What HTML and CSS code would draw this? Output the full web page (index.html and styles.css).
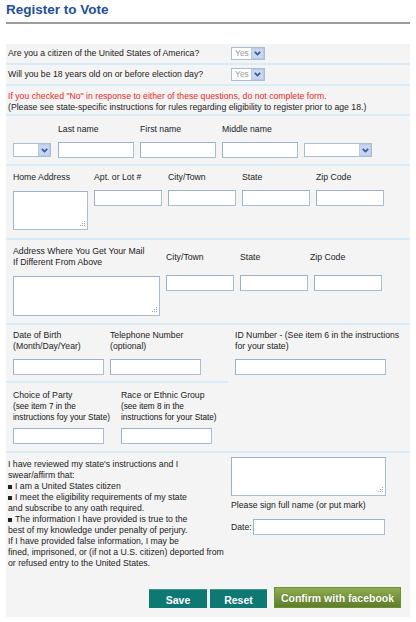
FILE: index.html
```html
<!DOCTYPE html>
<html lang="en">
<head>
<meta charset="utf-8">
<title>Register to Vote</title>
<link rel="stylesheet" href="styles.css">
</head>
<body>
<div class="page">
  <h1 class="title">Register to Vote</h1>
  <form class="form">
    <div class="row q-row">
      <span>Are you a citizen of the United States of America?</span>
      <span class="select sel-yes"><span class="sel-val">Yes</span><span class="sel-btn"><svg width="7" height="5" viewBox="0 0 7 5"><path d="M0.8 0.8 L3.5 3.6 L6.2 0.8" fill="none" stroke="#3b5a8e" stroke-width="1.7"/></svg></span></span>
    </div>
    <div class="row q-row">
      <span>Will you be 18 years old on or before election day?</span>
      <span class="select sel-yes"><span class="sel-val">Yes</span><span class="sel-btn"><svg width="7" height="5" viewBox="0 0 7 5"><path d="M0.8 0.8 L3.5 3.6 L6.2 0.8" fill="none" stroke="#3b5a8e" stroke-width="1.7"/></svg></span></span>
    </div>
    <div class="row notice">
      <div class="red">If you checked "No" in response to either of these questions, do not complete form.</div>
      <div>(Please see state-specific instructions for rules regarding eligibility to register prior to age 18.)</div>
    </div>

    <div class="row name-row">
      <span></span>
      <span class="lbl">Last name</span>
      <span class="lbl">First name</span>
      <span class="lbl">Middle name</span>
      <span></span>
      <span class="select sel-name sel-prefix"><span class="sel-val"></span><span class="sel-btn"><svg width="7" height="5" viewBox="0 0 7 5"><path d="M0.8 0.8 L3.5 3.6 L6.2 0.8" fill="none" stroke="#3b5a8e" stroke-width="1.7"/></svg></span></span>
      <span class="input"></span>
      <span class="input"></span>
      <span class="input"></span>
      <span class="select sel-name"><span class="sel-val"></span><span class="sel-btn"><svg width="7" height="5" viewBox="0 0 7 5"><path d="M0.8 0.8 L3.5 3.6 L6.2 0.8" fill="none" stroke="#3b5a8e" stroke-width="1.7"/></svg></span></span>
    </div>

    <div class="row home-row">
      <span class="lbl">Home Address</span>
      <span class="lbl">Apt. or Lot #</span>
      <span class="lbl">City/Town</span>
      <span class="lbl">State</span>
      <span class="lbl">Zip Code</span>
      <span class="textarea ta-home"><svg class="grip" width="6" height="6" viewBox="0 0 6 6"><rect x="5" y="0" width="1" height="1"/><rect x="3" y="2" width="1" height="1"/><rect x="5" y="2" width="1" height="1"/><rect x="1" y="4" width="1" height="1"/><rect x="3" y="4" width="1" height="1"/><rect x="5" y="4" width="1" height="1"/></svg></span>
      <span class="input"></span>
      <span class="input"></span>
      <span class="input"></span>
      <span class="input"></span>
    </div>

    <div class="row mail-row">
      <span class="lbl">Address Where You Get Your Mail<br>If Different From Above</span>
      <span class="lbl mid">City/Town</span>
      <span class="lbl mid">State</span>
      <span class="lbl mid zip-lbl">Zip Code</span>
      <span class="textarea ta-mail"><svg class="grip" width="6" height="6" viewBox="0 0 6 6"><rect x="5" y="0" width="1" height="1"/><rect x="3" y="2" width="1" height="1"/><rect x="5" y="2" width="1" height="1"/><rect x="1" y="4" width="1" height="1"/><rect x="3" y="4" width="1" height="1"/><rect x="5" y="4" width="1" height="1"/></svg></span>
      <span class="input"></span>
      <span class="input"></span>
      <span class="input"></span>
    </div>

    <div class="split">
      <div class="split-left">
        <div class="sub sub-dob">
          <span class="lbl">Date of Birth<br>(Month/Day/Year)</span>
          <span class="lbl">Telephone Number<br>(optional)</span>
          <span class="input"></span>
          <span class="input"></span>
        </div>
        <div class="sub sub-party">
          <span class="lbl">Choice of Party<br><span class="small">(see item 7 in the<br>instructions foy your State)</span></span>
          <span class="lbl">Race or Ethnic Group<br><span class="small">(see item 8 in the<br>instructions for your State)</span></span>
          <span class="input"></span>
          <span class="input"></span>
        </div>
      </div>
      <div class="id-cell">
        <span class="lbl">ID Number - (See item 6 in the instructions<br>for your state)</span>
        <span class="input id-input"></span>
      </div>
    </div>

    <div class="oath">
      <div class="oath-text">I have reviewed my state's instructions and I<br>swear/affirm that:<br><span class="bullet"></span>I am a United States citizen<br><span class="bullet"></span>I meet the eligibility requirements of my state<br>and subscribe to any oath required.<br><span class="bullet"></span>The information I have provided is true to the<br>best of my knowledge under penalty of perjury.<br>If I have provided false information, I may be<br>fined, imprisoned, or (if not a U.S. citizen) deported from<br>or refused entry to the United States.</div>
      <div class="sign">
        <span class="textarea ta-sign"><svg class="grip" width="6" height="6" viewBox="0 0 6 6"><rect x="5" y="0" width="1" height="1"/><rect x="3" y="2" width="1" height="1"/><rect x="5" y="2" width="1" height="1"/><rect x="1" y="4" width="1" height="1"/><rect x="3" y="4" width="1" height="1"/><rect x="5" y="4" width="1" height="1"/></svg></span>
        <div class="sign-note">Please sign full name (or put mark)</div>
        <div class="date-row"><span class="date-lbl">Date:</span><span class="input date-input"></span></div>
      </div>
    </div>

    <div class="actions">
      <button type="button" class="btn btn-teal btn-save">Save</button>
      <button type="button" class="btn btn-teal btn-reset">Reset</button>
      <button type="button" class="btn btn-fb">Confirm with facebook</button>
    </div>
  </form>
</div>
</body>
</html>
```
FILE: styles.css
```css
* { box-sizing: border-box; }
html, body { margin: 0; padding: 0; background: #fff; }
body {
  font-family: "Liberation Sans", Arial, sans-serif;
  font-size: 8.7px;
  line-height: 11px;
  color: #222;
}
.page { padding: 0 6px; }
.title {
  margin: 0;
  padding: 2px 0 4px;
  font-size: 13.5px;
  line-height: 16px;
  font-weight: bold;
  color: #1d4f9c;
  border-bottom: 2px solid #9c9c9c;
}
.form { margin-top: 20px; background: #f4f4f4; }
.row { border-bottom: 2px solid #d8ebf8; }

.q-row {
  display: grid;
  grid-template-columns: 223px auto;
  align-items: center;
  height: 21px;
  padding-left: 2px;
  white-space: nowrap;
}
.notice { padding: 5px 2px 1px; white-space: nowrap; }
.red { color: #e8291f; }

.lbl { white-space: nowrap; }
.mid { align-self: center; }
.small { font-size: 8.2px; color: #111; }

.input {
  display: block;
  height: 16px;
  background: #fff;
  border: 1px solid #a9bdd3;
  border-top-color: #9bb1ca;
  border-left-color: #9bb1ca;
}
.textarea {
  display: flex;
  justify-content: flex-end;
  align-items: flex-end;
  padding: 2px;
  background: #fff;
  border: 1px solid #a9bdd3;
  border-top-color: #9bb1ca;
  border-left-color: #9bb1ca;
}
.grip { fill: #a8a8a8; }

.select {
  display: flex;
  height: 13px;
  background: #fff;
  border: 1px solid #a9bdd3;
}
.sel-yes { width: 34px; }
.sel-val { flex: 1; padding-left: 3px; color: #9a9a9a; font-size: 8.5px; line-height: 11px; }
.sel-btn {
  width: 13px;
  display: flex;
  align-items: center;
  justify-content: center;
  background: #c7d6f3;
  border: 1px solid #b9cae9;
}
.sel-name { height: 14px; margin-top: 1px; }
.sel-name .sel-btn { width: 12px; }
.sel-prefix { width: 38px; }

.name-row {
  display: grid;
  grid-template-columns: 39px 76px 76px 76px 68px;
  column-gap: 6px;
  row-gap: 7px;
  padding: 8px 0 6px 7px;
}
.home-row {
  display: grid;
  grid-template-columns: 75px 68px 68px 68px 68px;
  column-gap: 6px;
  row-gap: 7px;
  align-items: start;
  padding: 6px 0 8px 7px;
}
.ta-home { height: 39px; margin-top: 1px; }
.mail-row {
  display: grid;
  grid-template-columns: 147px 68px 68px 68px;
  column-gap: 6px;
  row-gap: 7px;
  align-items: start;
  padding: 6px 0 7px 7px;
}
.zip-lbl { margin-left: -4px; }
.ta-mail { height: 40px; margin-top: 1px; }

.split {
  display: grid;
  grid-template-columns: 222px 1fr;
  border-bottom: 2px solid #d8ebf8;
}
.sub { display: grid; column-gap: 6px; padding-left: 7px; }
.sub-dob {
  grid-template-columns: 91px 91px;
  row-gap: 7px;
  padding-top: 5px;
  padding-bottom: 6px;
  border-bottom: 2px solid #d8ebf8;
}
.sub-party {
  grid-template-columns: 102px 91px;
  row-gap: 5px;
  padding-top: 7px;
  padding-bottom: 7px;
}
.sub-party .input { width: 91px; }
.id-cell {
  display: flex;
  flex-direction: column;
  gap: 7px;
  padding: 5px 0 0 7px;
}
.id-input { width: 151px; }

.oath {
  display: grid;
  grid-template-columns: 223px 1fr;
  padding-left: 2px;
}
.oath-text { padding-top: 6px; white-space: nowrap; }
.bullet {
  display: inline-block;
  width: 4px;
  height: 4px;
  background: #222;
  margin-right: 3px;
  vertical-align: 0;
}
.ta-sign { width: 155px; height: 39px; margin-top: 4px; }
.sign-note { margin-top: 4px; }
.date-row { display: flex; align-items: center; margin-top: 8px; }
.date-lbl { width: 22px; }
.date-input { width: 132px; }

.actions {
  display: flex;
  justify-content: flex-end;
  align-items: flex-end;
  padding: 18px 9px 9px 0;
}
.btn {
  margin: 0;
  padding: 0;
  font-family: "Liberation Sans", Arial, sans-serif;
  font-size: 10.5px;
  font-weight: bold;
  color: #fff;
  border: none;
  display: flex;
  align-items: center;
  justify-content: center;
}
.btn-teal {
  height: 19px;
  padding-top: 2px;
  background: #0e7873;
  border-top: 1px solid #3d9590;
}
.btn-save { width: 58px; }
.btn-reset { width: 57px; margin-left: 3px; }
.btn-fb {
  width: 127px;
  height: 21px;
  margin-left: 7px;
  background: linear-gradient(#8fad51, #5d7d27);
  border: 1px solid #6f8f36;
  text-shadow: 0 0 1px #4a641c;
}
```
